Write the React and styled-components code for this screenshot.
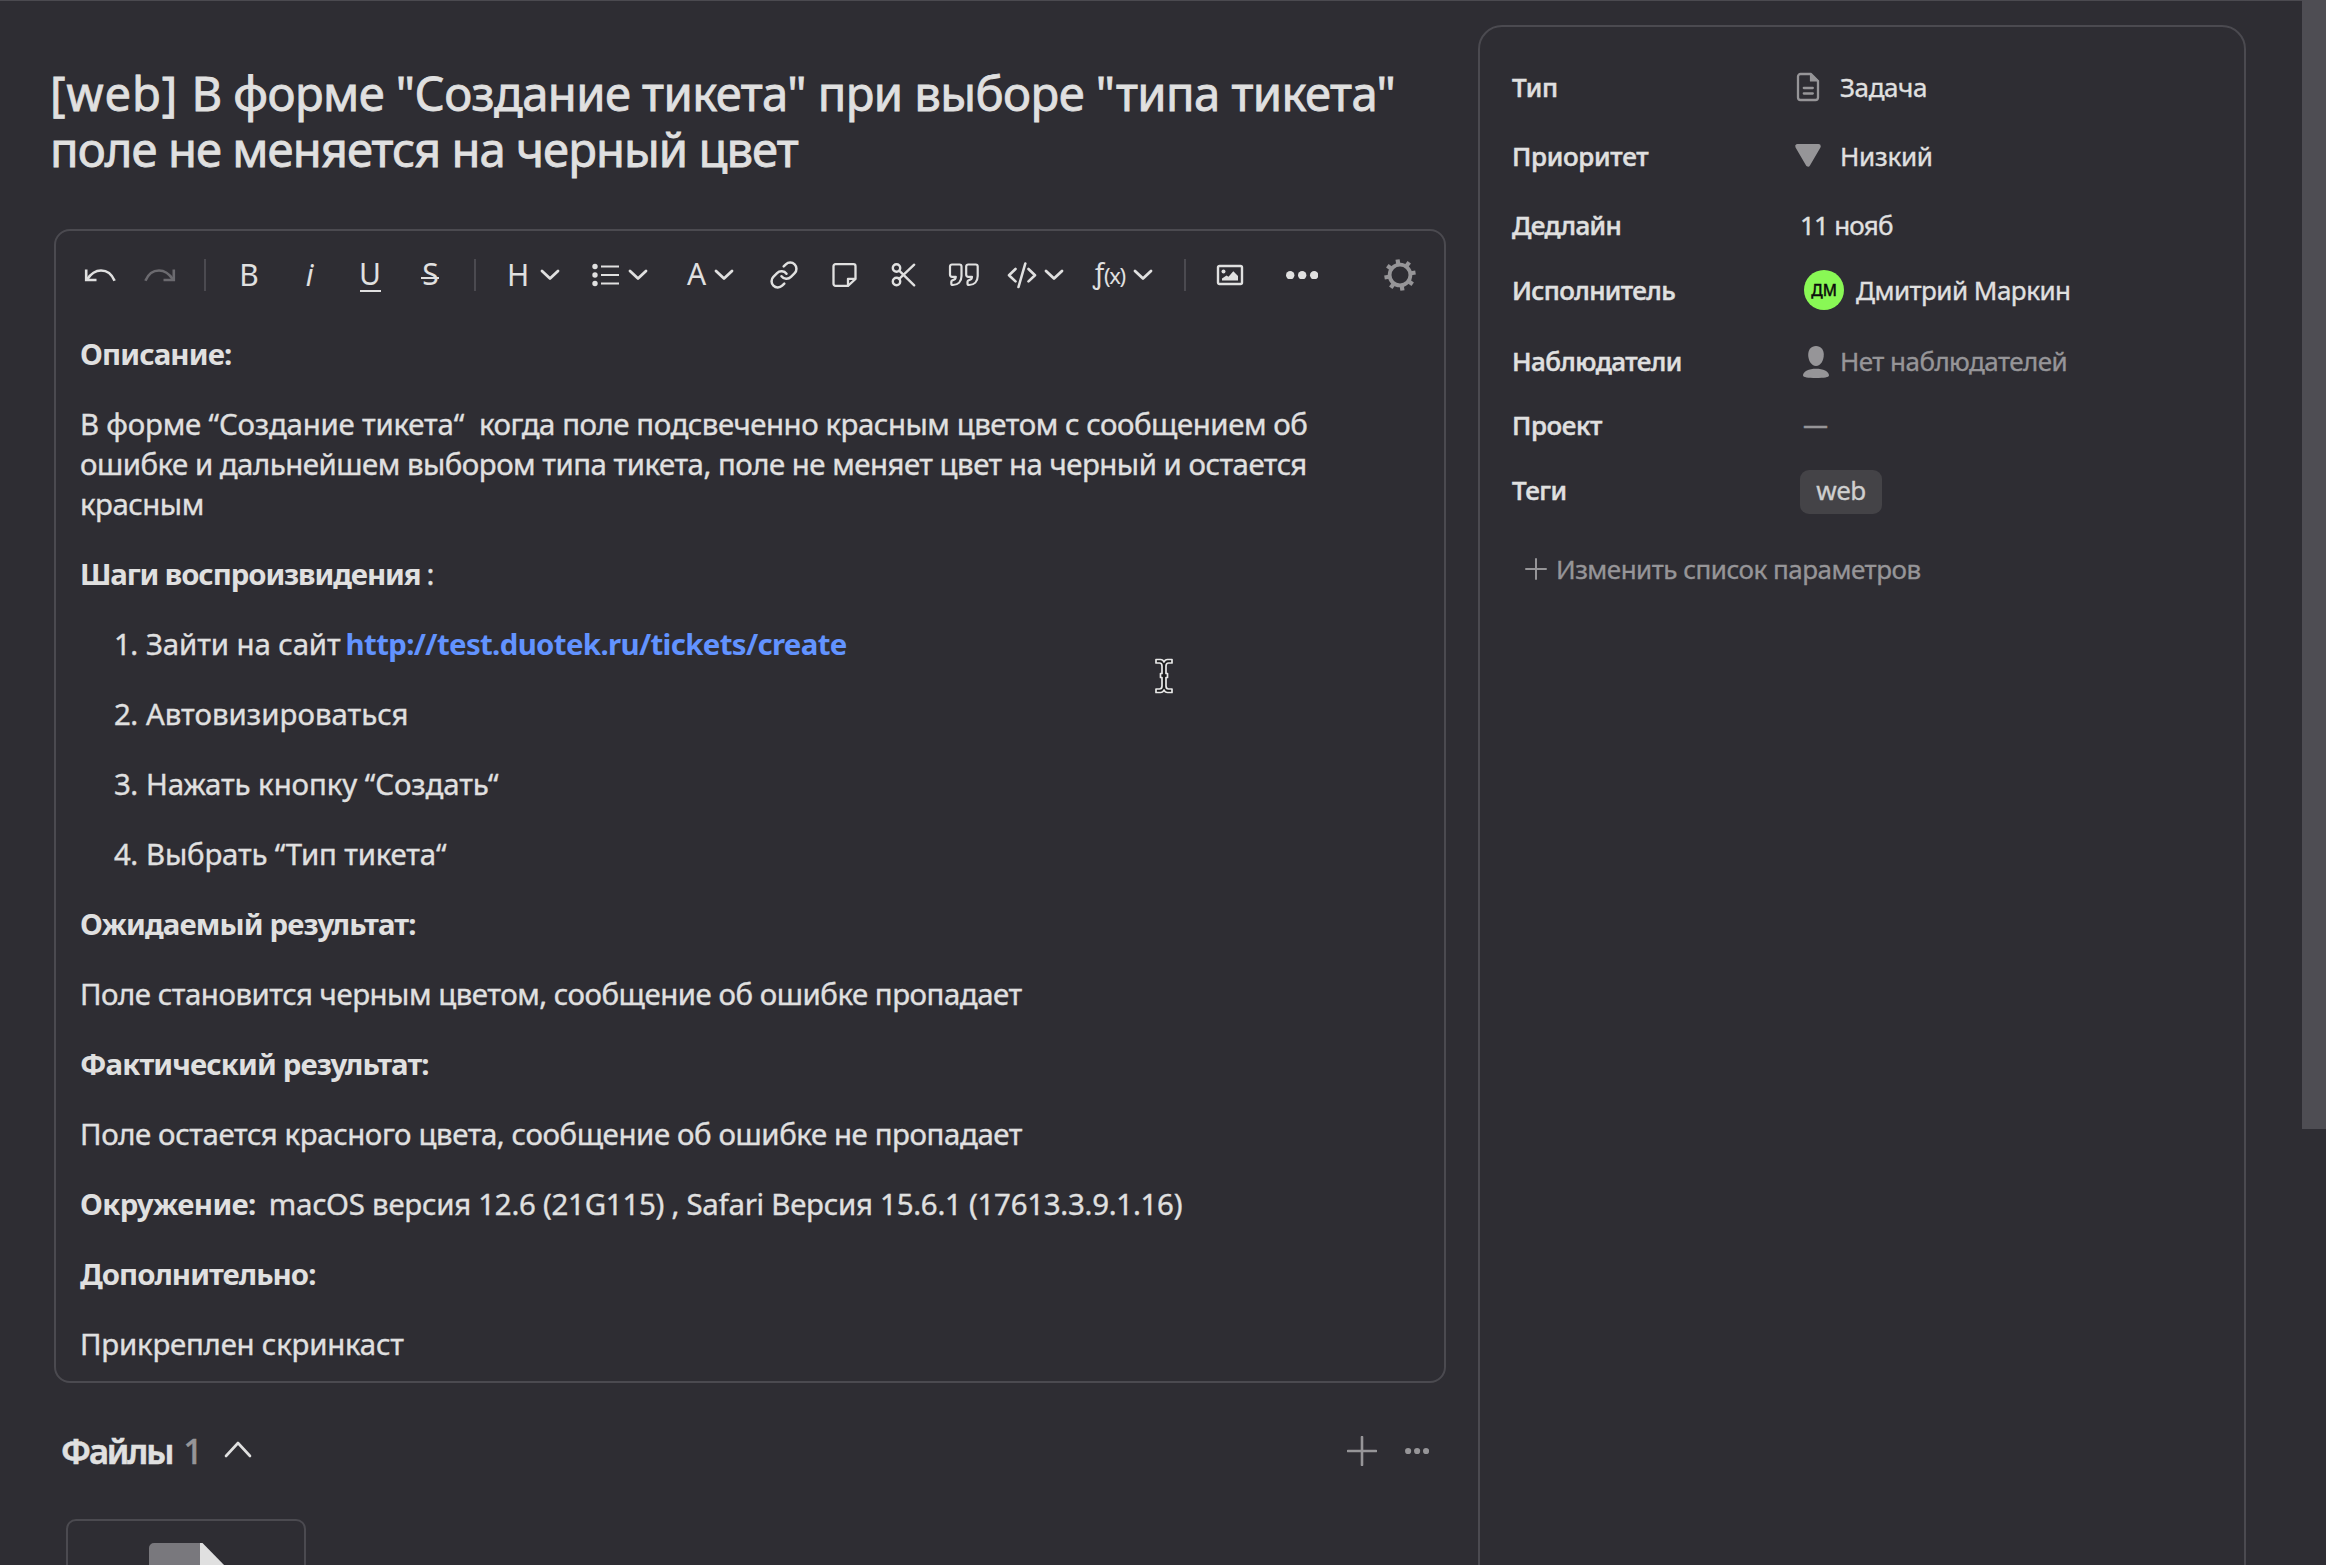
import React from 'react';
import styled, { createGlobalStyle } from 'styled-components';
import { Link as LinkIcon } from 'lucide-react';

const color = {
  bg: '#2e2d33',
  line: '#4b4a50',
  text: '#e0e0e0',
  muted: '#969598',
  link: '#6293ff',
};

const GlobalStyle = createGlobalStyle`
  *, *::before, *::after { box-sizing: border-box; }
  body {
    margin: 0;
    background: ${color.bg};
    color: ${color.text};
    font-family: "Noto Sans", "Open Sans", sans-serif;
    -webkit-text-stroke: 0.35px currentColor;
    overflow: hidden;
  }
`;

const Page = styled.div`
  display: flex;
  height: 1565px;
  overflow: hidden;
`;

const Content = styled.div`
  display: flex;
  align-items: flex-start;
  gap: 32px;
  flex: 1;
  height: 1565px;
  padding-left: 54px;
  border-top: 1px solid ${color.line};
`;

const ScrollTrack = styled.div`
  width: 24px;
  height: 100%;
`;

const ScrollThumb = styled.div`
  height: 1129px;
  background: #4e4d53;
`;

const Main = styled.main`
  display: flex;
  flex-direction: column;
  width: 1392px;
  padding-top: 64px;
`;

const Title = styled.h1`
  margin: 0 0 52px -4px;
  font-size: 47.2px;
  line-height: 56px;
  font-weight: 400;
  -webkit-text-stroke: 0.8px currentColor;
`;

const Line = styled.span`
  display: block;
  white-space: pre;
  letter-spacing: ${(p) => p.$track || 0}px;
`;

const Run = styled.span`
  letter-spacing: ${(p) => p.$track}px;
`;

const Editor = styled.section`
  position: relative;
  height: 1154px;
  border: 2px solid ${color.line};
  border-radius: 16px;
`;

const Toolbar = styled.div`
  display: flex;
  align-items: center;
  height: 88px;
  padding: 0 14px;
  -webkit-text-stroke: 0;
`;

const Tool = styled.button`
  display: flex;
  align-items: center;
  justify-content: ${(p) => (p.$start ? 'flex-start' : 'center')};
  flex: none;
  width: ${(p) => p.$width || 60}px;
  height: 60px;
  padding: 0 0 0 ${(p) => p.$start || 0}px;
  margin-left: ${(p) => (p.$last ? 'auto' : 0)};
  gap: ${(p) => p.$gap || 0}px;
  border: 0;
  background: none;
  color: ${(p) => (p.$tone ? p.$tone : color.text)};
  font: inherit;
`;

const Glyph = styled.span`
  position: relative;
  font-size: 30px;
  line-height: 40px;
  font-style: ${(p) => (p.$italic ? 'italic' : 'normal')};
  margin-top: ${(p) => p.$shift || 0}px;
  margin-right: ${(p) => p.$back || 0}px;
`;

const Rule = styled.span`
  position: absolute;
  left: 50%;
  top: ${(p) => p.$top}px;
  width: ${(p) => p.$width}px;
  height: 2px;
  margin-left: -${(p) => p.$width / 2}px;
  background: currentColor;
`;

const Fn = styled.span`
  display: flex;
  align-items: center;
  line-height: 40px;
  font-size: 22px;
  letter-spacing: -1.3px;
`;

const FnLetter = styled.span`
  font-size: 27px;
  margin-right: 1px;
  margin-top: -5px;
`;

const Divider = styled.div`
  display: flex;
  justify-content: center;
  flex: none;
  width: 30px;

  &::before {
    content: '';
    width: 2px;
    height: 32px;
    background: ${color.line};
  }
`;

const Document = styled.div`
  display: flex;
  flex-direction: column;
  gap: 30px;
  padding: 15px 22px 0 24px;
  font-size: 29.4px;
  line-height: 40px;
`;

const Paragraph = styled.p`
  margin: 0;
`;

const Heading = styled.p`
  display: flex;
  margin: 0;
  gap: ${(p) => p.$gap || 0}px;
`;

const Strong = styled.strong`
  font-weight: 700;
  white-space: pre;
  letter-spacing: ${(p) => p.$track || 0}px;
  -webkit-text-stroke: 0;
`;

const Steps = styled.ol`
  display: flex;
  flex-direction: column;
  gap: 30px;
  margin: 0;
  padding: 0 0 0 34px;
  list-style: none;
`;

const Step = styled.li`
  display: flex;
`;

const StepNumber = styled.span`
  width: 32px;
  letter-spacing: -0.5px;
`;

const StepLink = styled.a`
  margin-left: 5px;
  color: ${color.link};
  font-weight: 700;
  letter-spacing: -0.65px;
  -webkit-text-stroke: 0;
`;

const TextCursor = styled.svg`
  position: absolute;
  left: 1098px;
  top: 426px;
`;

const FilesHeader = styled.header`
  display: flex;
  align-items: center;
  height: 60px;
  margin: 38px 0;
  padding: 0 17px 0 7px;
`;

const FilesTitle = styled.h2`
  margin: 0;
  font-size: 34.5px;
  line-height: 48px;
  font-weight: 600;
  letter-spacing: -2.1px;
  -webkit-text-stroke: 0.6px currentColor;
`;

const FilesCount = styled.span`
  width: 40px;
  margin-left: 11px;
  font-size: 34.5px;
  line-height: 48px;
  font-weight: 500;
  color: ${color.muted};
`;

const FilesActions = styled.div`
  display: flex;
  align-items: center;
  gap: 28px;
  margin-left: auto;
  color: ${color.muted};
`;

const FileCard = styled.div`
  flex: none;
  display: flex;
  justify-content: center;
  width: 240px;
  height: 240px;
  margin-left: 12px;
  padding: 22px 0 0 1px;
  border: 2px solid ${color.line};
  border-radius: 10px;
`;

const Side = styled.aside`
  width: 768px;
  height: 1600px;
  margin-top: 24px;
  padding: 42px 31px;
  border: 2px solid ${color.line};
  border-radius: 24px;
  font-size: 26px;
  line-height: 36px;
`;

const Row = styled.div`
  display: grid;
  grid-template-columns: 281px 1fr;
  height: 36px;
  margin: 0 0 ${(p) => p.$after}px 1px;
`;

const Label = styled.div`
  font-weight: 500;
  letter-spacing: ${(p) => p.$track}px;
  -webkit-text-stroke: 0.5px currentColor;
`;

const Value = styled.div`
  display: flex;
  align-items: center;
  height: 36px;
  gap: ${(p) => p.$gap || 0}px;
  padding-left: ${(p) => p.$indent || 0}px;
  white-space: pre;
  color: ${(p) => (p.$muted ? color.muted : color.text)};
  letter-spacing: ${(p) => p.$track || 0}px;
`;

const ValueIcon = styled.span`
  display: flex;
  color: ${color.muted};
`;

const Dash = styled.span`
  margin-top: -2px;
  font-size: 25px;
`;

const Avatar = styled.span`
  display: flex;
  align-items: center;
  justify-content: center;
  width: 40px;
  height: 40px;
  border-radius: 50%;
  background: #89f855;
  color: #0c0c0c;
  font-size: 15.5px;
  line-height: 20px;
  font-weight: 500;
  letter-spacing: 0;
`;

const Tag = styled.span`
  flex: none;
  width: 82px;
  height: 44px;
  margin: 4px 0 0;
  border-radius: 9px;
  background: #444347;
  color: #cfcfcf;
  line-height: 40px;
  text-align: center;
`;

const AddParam = styled.button`
  display: flex;
  align-items: center;
  gap: 9px;
  height: 36px;
  padding: 0 0 0 14px;
  border: 0;
  background: none;
  color: ${color.muted};
  font: inherit;
  letter-spacing: -0.5px;
`;

const Icon = ({ w, h, sw = 2.6, children, ...rest }) => (
  <svg width={w} height={h} viewBox={`0 0 ${w} ${h}`} fill="none" stroke="currentColor"
    strokeWidth={sw} strokeLinecap="round" strokeLinejoin="round" {...rest}>
    {children}
  </svg>
);

const Chevron = () => (
  <Icon w={20} h={12} sw={2.8}><path d="M2 2l8 7.6L18 2" /></Icon>
);

const Undo = () => (
  <Icon w={60} h={40} sw={2.6} strokeLinecap="butt" strokeLinejoin="miter">
    <path d="M16.2 14.5V25H26.5" />
    <path d="M17 24.5C21 18.5 26 15.5 31 15.5C37.5 15.5 42 19.5 44.6 25.8" />
  </Icon>
);

const Redo = () => (
  <Icon w={60} h={40} sw={2.6} strokeLinecap="butt" strokeLinejoin="miter">
    <path d="M43.8 14.5V25H33.5" />
    <path d="M43 24.5C39 18.5 34 15.5 29 15.5C22.5 15.5 18 19.5 15.4 25.8" />
  </Icon>
);

const Bullets = () => (
  <Icon w={28} h={24} sw={2.2} strokeLinecap="butt">
    <path d="M9 3.5h18M9 12h18M9 20.5h18" />
    {[3.5, 12, 20.5].map((y) => (
      <circle key={y} cx="3" cy={y} r="2.7" fill="currentColor" stroke="none" />
    ))}
  </Icon>
);

const Note = () => (
  <Icon w={26} h={26} sw={2.3}>
    <path d="M17 23.8H4.5a2 2 0 0 1-2-2V4.2a2 2 0 0 1 2-2H22.5a2 2 0 0 1 2 2V17z" />
    <path d="M17 23.5V16.800H24" />
  </Icon>
);

const Scissors = () => (
  <Icon w={26} h={26} sw={2.4}>
    <circle cx="5.5" cy="6" r="3.7" />
    <circle cx="5.5" cy="19.5" r="3.7" />
    <path d="M8.2 8.7L23.2 23.3M8.2 16.800L23.2 2.7" />
  </Icon>
);

const quotePath =
  'M4 2.5h7.5a2 2 0 0 1 2 2V14c0 5.5-3.5 9-8.7 9a1.5 1.5 0 0 1-1.5-1.5v-1.7c0-.9.6-1.5 1.6-1.7c1.900-.4 2.900-1.4 2.900-3.300H4a2 2 0 0 1-2-2V4.500a2 2 0 0 1 2-2z';

const Quotes = () => (
  <Icon w={32} h={26} sw={2.2}>
    <path d={quotePath} />
    <path d={quotePath} transform="translate(16.2 0)" />
  </Icon>
);

const Code = () => (
  <Icon w={30} h={28} sw={2.6}>
    <path d="M8.5 8L2 14.2L8.5 20.4M21.5 8L28 14.2L21.5 20.4M18.3 2.5L11.5 26" />
  </Icon>
);

const Picture = () => (
  <Icon w={28} h={22} sw={2.4}>
    <rect x="2" y="2" width="24" height="18" rx="1.5" />
    <path d="M6 16.5V14.5L10.5 11.5L12.5 12.8L17.3 7.2L22 12V16.5z" fill="currentColor" stroke="none" />
    <circle cx="7.5" cy="7.5" r="2" fill="currentColor" stroke="none" />
  </Icon>
);

const Dots = ({ gap, r }) => (
  <Icon w={gap * 2 + r * 2} h={r * 2}>
    {[0, 1, 2].map((i) => (
      <circle key={i} cx={r + gap * i} cy={r} r={r} fill="currentColor" stroke="none" />
    ))}
  </Icon>
);

const Gear = () => (
  <Icon w={32} h={32} strokeLinecap="butt">
    <circle cx="16" cy="16" r="10.4" strokeWidth="3.8" />
    {[-99, -54, -9, 36, 81, 126, 171, 216].map((a) => (
      <path key={a} d="M27 16H31.7" strokeWidth="4.2" transform={`rotate(${a} 16 16)`} />
    ))}
  </Icon>
);

const Plus = ({ size, sw }) => (
  <Icon w={size} h={size} sw={sw}>
    <path d={`M${size / 2} 1V${size - 1}M1 ${size / 2}H${size - 1}`} />
  </Icon>
);

const TaskIcon = () => (
  <Icon w={30} h={30} sw={2.3}>
    <path d="M18 2H7.5a2.500 2.500 0 0 0-2.500 2.500v21a2.500 2.500 0 0 0 2.500 2.500h15a2.500 2.500 0 0 0 2.500-2.500V9z" />
    <path d="M17.500 2V9H25z" fill="currentColor" strokeWidth="1.200" />
    <path d="M10.800 16h9M10.800 21.500h9" />
  </Icon>
);

const LowIcon = () => (
  <Icon w={30} h={26}>
    <path d="M4.5 3.300H25.5L15 21.300z" fill="currentColor" strokeWidth="4.500" />
  </Icon>
);

const PersonIcon = () => (
  <Icon w={30} h={34} stroke="none" fill="currentColor">
    <path d="M15 2c5 0 7.800 3.800 7.800 8.800c0 5.500-3 11.200-7.800 11.200s-7.800-5.700-7.800-11.200C7.200 5.800 10 2 15 2z" />
    <path d="M15 24.800c7 0 13 2.700 13 6.700c0 1.800-5 2.500-13 2.500s-13-.7-13-2.500c0-4 6-6.700 13-6.700z" />
  </Icon>
);

const FileIcon = () => (
  <svg width="76" height="110" viewBox="0 0 76 110">
    <path d="M5 0H51V26H76V110H5a5 5 0 0 1-5-5V5a5 5 0 0 1 5-5z" fill="#79787d" />
    <path d="M51 0h2.500L78 25V27H51z" fill="#e0e0e0" />
  </svg>
);

const steps = [
  { text: 'Автовизироваться', track: 0.03 },
  { text: 'Нажать кнопку “Создать“', track: -0.08 },
  { text: 'Выбрать “Тип тикета“', track: -0.18 },
];

function EditorToolbar() {
  return (
    <Toolbar>
      <Tool><Undo /></Tool>
      <Tool $tone="#6b6a6f"><Redo /></Tool>
      <Divider />
      <Tool><Glyph $back={2}>B</Glyph></Tool>
      <Tool><Glyph $italic $back={1}>i</Glyph></Tool>
      <Tool><Glyph $shift={-3}>U<Rule $top={36} $width={21} /></Glyph></Tool>
      <Tool><Glyph $shift={-3} $back={-1}>S<Rule $top={23} $width={18} /></Glyph></Tool>
      <Divider />
      <Tool $width={87} $start={17} $gap={11}><Glyph $shift={-1}>H</Glyph><Chevron /></Tool>
      <Tool $width={87} $start={15} $gap={8}><Bullets /><Chevron /></Tool>
      <Tool $width={90} $start={23} $gap={8}><Glyph $shift={-3}>A</Glyph><Chevron /></Tool>
      <Tool><LinkIcon size={30} strokeWidth={2} /></Tool>
      <Tool><Note /></Tool>
      <Tool><Scissors /></Tool>
      <Tool><Quotes /></Tool>
      <Tool $width={84} $start={13} $gap={7}><Code /><Chevron /></Tool>
      <Tool $width={92} $start={15} $gap={8}>
        <Fn><FnLetter>ƒ</FnLetter>(x)</Fn>
        <Chevron />
      </Tool>
      <Divider />
      <Tool><Picture /></Tool>
      <Tool $width={84}><Dots gap={12} r={4.2} /></Tool>
      <Tool $last $tone={color.muted}><Gear /></Tool>
    </Toolbar>
  );
}

function Description() {
  return (
    <Document>
      <Heading><Strong $track={-0.86}>Описание:</Strong></Heading>
      <Paragraph>
        <Line $track={-0.45}>
          <Run $track={-0.2}>{'В форме “Создание тикета“  '}</Run>
          {'когда поле подсвеченно красным цветом с сообщением об'}
        </Line>
        <Line $track={-0.5}>ошибке и дальнейшем выбором типа тикета, поле не меняет цвет на черный и остается</Line>
        <Line $track={-0.5}>красным</Line>
      </Paragraph>
      <Heading $gap={6}><Strong $track={-1.1}>Шаги воспроизвидения</Strong>:</Heading>
      <Steps>
        <Step>
          <StepNumber>1.</StepNumber>
          <Line $track={-0.1}>Зайти на сайт</Line>
          <StepLink>http://test.duotek.ru/tickets/create</StepLink>
        </Step>
        {steps.map((s, i) => (
          <Step key={s.text}>
            <StepNumber>{i + 2}.</StepNumber>
            <Line $track={s.track}>{s.text}</Line>
          </Step>
        ))}
      </Steps>
      <Heading><Strong $track={-0.88}>Ожидаемый результат:</Strong></Heading>
      <Paragraph><Line $track={-0.47}>Поле становится черным цветом, сообщение об ошибке пропадает</Line></Paragraph>
      <Heading><Strong $track={-0.9}>Фактический результат:</Strong></Heading>
      <Paragraph><Line $track={-0.4}>Поле остается красного цвета, сообщение об ошибке не пропадает</Line></Paragraph>
      <Heading $gap={13}>
        <Strong $track={-0.63}>Окружение:</Strong>
        <Line $track={-0.25}>macOS версия 12.6 (21G115) , Safari Версия 15.6.1 (17613.3.9.1.16)</Line>
      </Heading>
      <Heading><Strong $track={-0.97}>Дополнительно:</Strong></Heading>
      <Paragraph><Line $track={-0.22}>Прикреплен скринкаст</Line></Paragraph>
    </Document>
  );
}

export default function App() {
  return (
    <>
      <GlobalStyle />
      <Page>
        <Content>
          <Main>
            <Title>
              <Line $track={-0.57}>
                <Run $track={0.9}>[web] </Run>
                {'В форме "Создание тикета" при выборе "типа тикета"'}
              </Line>
              <Line $track={-0.94}>поле не меняется на черный цвет</Line>
            </Title>
            <Editor>
              <EditorToolbar />
              <Description />
              <TextCursor width="20" height="38" viewBox="0 0 20 38">
                <path
                  d="M2 2.5H6.5Q9 2.5 10 5Q11 2.5 13.5 2.5H18V6H14.5Q12 6 12 9V16.5H13.5V20.5H12V29Q12 32 14.5 32H18V35.5H13.5Q11 35.5 10 33Q9 35.5 6.5 35.5H2V32H5.5Q8 32 8 29V20.5H6.500V16.500H8V9Q8 6 5.500 6H2z"
                  fill="#1b1b1d" stroke="#e8e8e8" strokeWidth="1.7" strokeLinejoin="round"
                />
              </TextCursor>
            </Editor>
            <FilesHeader>
              <FilesTitle>Файлы</FilesTitle>
              <FilesCount>1</FilesCount>
              <Icon w={30} h={20} sw={2.6}><path d="M3 15L15 2L27 15" /></Icon>
              <FilesActions>
                <Plus size={30} sw={2.6} />
                <Dots gap={9} r={3.1} />
              </FilesActions>
            </FilesHeader>
            <FileCard><FileIcon /></FileCard>
          </Main>
          <Side>
            <Row $after={33}>
              <Label $track={-0.2}>Тип</Label>
              <Value $gap={17} $track={-0.4}><ValueIcon><TaskIcon /></ValueIcon>Задача</Value>
            </Row>
            <Row $after={33}>
              <Label $track={-0.3}>Приоритет</Label>
              <Value $gap={17} $track={-0.25}><ValueIcon><LowIcon /></ValueIcon>Низкий</Value>
            </Row>
            <Row $after={29}>
              <Label $track={-0.61}>Дедлайн</Label>
              <Value $indent={7} $track={-0.78}>11 нояб</Value>
            </Row>
            <Row $after={35}>
              <Label $track={-0.62}>Исполнитель</Label>
              <Value $indent={11} $gap={12} $track={-0.52}><Avatar>ДМ</Avatar>Дмитрий Маркин</Value>
            </Row>
            <Row $after={28}>
              <Label $track={-0.55}>Наблюдатели</Label>
              <Value $indent={8} $gap={9} $track={-0.54} $muted><ValueIcon><PersonIcon /></ValueIcon>Нет наблюдателей</Value>
            </Row>
            <Row $after={29}>
              <Label $track={-0.4}>Проект</Label>
              <Value $indent={10} $muted><Dash>—</Dash></Value>
            </Row>
            <Row $after={43}>
              <Label $track={-0.44}>Теги</Label>
              <Value $indent={7} $track={-0.55}><Tag>web</Tag></Value>
            </Row>
            <AddParam><Plus size={22} sw={2} />Изменить список параметров</AddParam>
          </Side>
        </Content>
        <ScrollTrack><ScrollThumb /></ScrollTrack>
      </Page>
    </>
  );
}
